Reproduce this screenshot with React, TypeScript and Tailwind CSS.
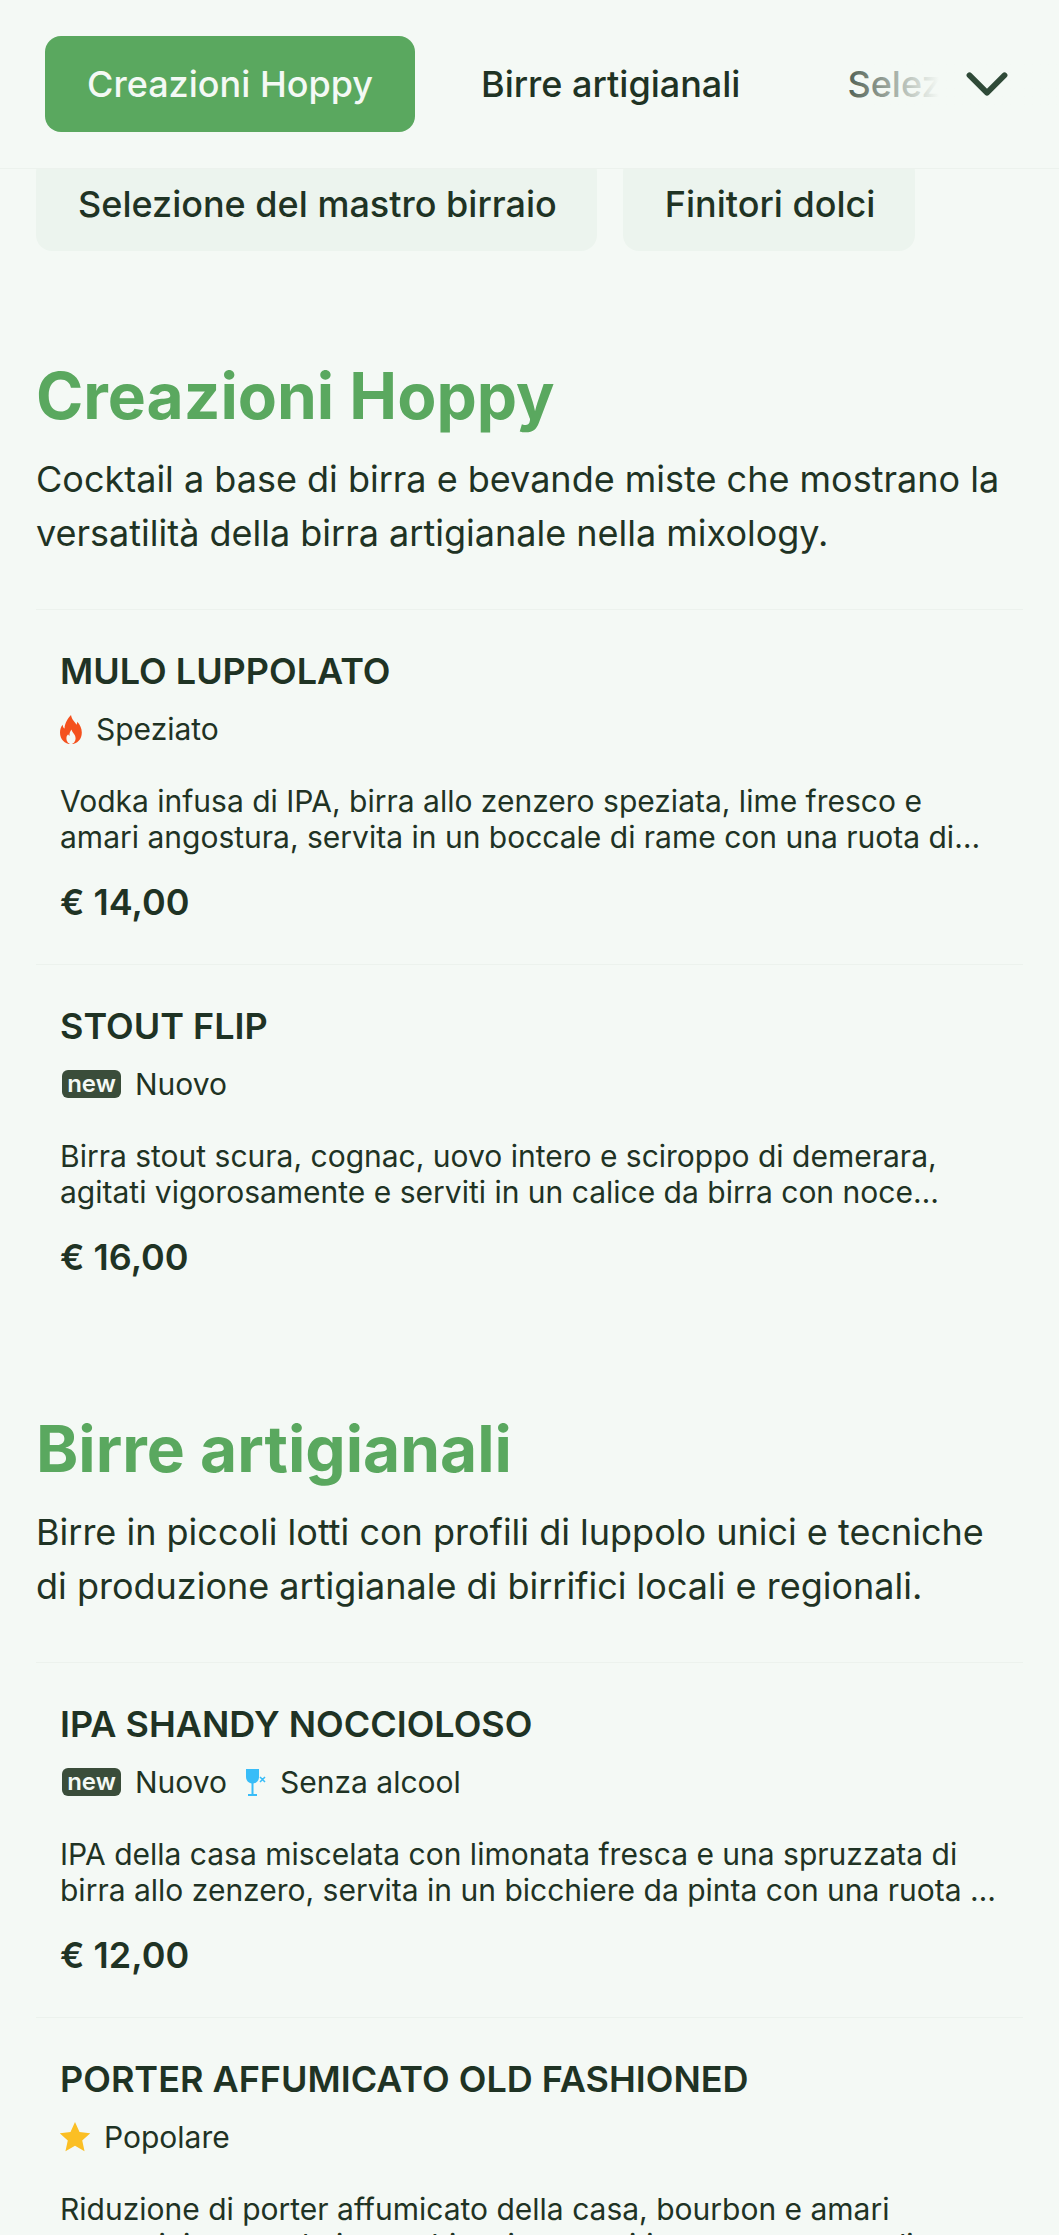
import React from 'react';
import { ChevronDown } from 'lucide-react';

const Flame = () => (
  <svg viewBox="0 0 24 30" className="h-[29px] w-[22px] shrink-0" preserveAspectRatio="none">
    <path fill="#f4511e" d="M12 0c1 5 4 7 6 10 .5-1 .8-2 .8-3 3 3 5 7 5 11 0 7-5 12-11.800 12S0 25 0 18c0-3 1-6 3-8 0 2 .6 3 2 4C5 9 8 4 12 0z" />
    <path fill="#f4f9f5" d="M12.500 15c.5 3 4.500 5 4.500 9 0 3-2 6-5 6s-5-3-5-6c0-2 1-3 2-4 .3 1 .8 1.500 1.500 1.500C10 19 11 17 12.500 15z" />
  </svg>
);

const Star = () => (
  <svg viewBox="1 1 22 22" className="h-[30px] w-[30px] shrink-0">
    <path fill="#fbbf24" d="M12 1l3.300 7.400 8 .8-6 5.400 1.700 7.900-7-4.100-7 4.100 1.700-7.900-6-5.400 8-.8z" />
  </svg>
);

const NoAlcohol = () => (
  <svg viewBox="0 0 20 27" className="h-[27px] w-[20px] shrink-0">
    <path fill="#38bdf8" d="M0 0h13v8c0 3.500-2.400 6-5.500 6.500V25H11v2H2v-2h3.500V14.500C2.400 14 0 11.500 0 8z" />
    <path stroke="#38bdf8" strokeWidth="1.500" d="M14 8l5 5M19 8l-5 5" />
  </svg>
);

const NewBadge = () => (
  <span className="ml-[2px] flex h-[28px] w-[59px] shrink-0 items-center justify-center rounded-[6px] bg-[#3a4d3a] text-[24px] leading-none font-semibold text-[#f4f9f5]">
    new
  </span>
);

interface Tag {
  icon: React.ReactNode;
  label: string;
}

interface Item {
  name: string;
  tags: Tag[];
  desc: string;
  price?: string;
}

interface Section {
  title: string;
  intro: string;
  items: Item[];
}

const sections: Section[] = [
  {
    title: 'Creazioni Hoppy',
    intro: 'Cocktail a base di birra e bevande miste che mostrano la versatilità della birra artigianale nella mixology.',
    items: [
      {
        name: 'MULO LUPPOLATO',
        tags: [{ icon: <Flame />, label: 'Speziato' }],
        desc: 'Vodka infusa di IPA, birra allo zenzero speziata, lime fresco e amari angostura, servita in un boccale di rame con una ruota di lime disidratata e menta fresca.',
        price: '€ 14,00',
      },
      {
        name: 'STOUT FLIP',
        tags: [{ icon: <NewBadge />, label: 'Nuovo' }],
        desc: 'Birra stout scura, cognac, uovo intero e sciroppo di demerara, agitati vigorosamente e serviti in un calice da birra con noce moscata appena grattugiata sopra.',
        price: '€ 16,00',
      },
    ],
  },
  {
    title: 'Birre artigianali',
    intro: 'Birre in piccoli lotti con profili di luppolo unici e tecniche di produzione artigianale di birrifici locali e regionali.',
    items: [
      {
        name: 'IPA SHANDY NOCCIOLOSO',
        tags: [
          { icon: <NewBadge />, label: 'Nuovo' },
          { icon: <NoAlcohol />, label: 'Senza alcool' },
        ],
        desc: 'IPA della casa miscelata con limonata fresca e una spruzzata di birra allo zenzero, servita in un bicchiere da pinta con una ruota di limone e rametto di rosmarino.',
        price: '€ 12,00',
      },
      {
        name: 'PORTER AFFUMICATO OLD FASHIONED',
        tags: [{ icon: <Star />, label: 'Popolare' }],
        desc: 'Riduzione di porter affumicato della casa, bourbon e amari aromatici, mescolati con ghiaccio e serviti con una scorza di arancia.',
      },
    ],
  },
];

const App: React.FC = () => {
  return (
    <div className="h-[2235px] overflow-hidden bg-[#f4f9f5] font-['Inter',sans-serif] text-[#1f3324]">
      {/* barra categorie */}
      <div className="relative z-10 flex h-[169px] items-center border-b border-[#ecf2ed] bg-[#f4f9f5] pl-[45px]">
        <div className="flex h-[96px] w-[370px] shrink-0 items-center justify-center rounded-[16px] bg-[#5aa85f] text-[36px] font-medium text-[#f4f9f5]">
          Creazioni Hoppy
        </div>
        <div className="relative flex flex-1 items-center overflow-hidden">
          <span className="ml-[66px] shrink-0 text-[36px] font-medium">Birre artigianali</span>
          <span className="ml-[107px] shrink-0 text-[36px] font-medium">Selezione del mastro birraio</span>
          <div className="absolute top-0 right-0 bottom-0 flex w-[240px] items-center justify-end bg-gradient-to-r from-transparent via-[#f4f9f5] via-50% to-[#f4f9f5] pr-[37px]">
            <ChevronDown size={70} strokeWidth={2} className="text-[#2f4a38]" />
          </div>
        </div>
      </div>

      {/* seconda riga */}
      <div className="-mt-[13px] flex gap-[26px] pl-[36px]">
        <div className="flex h-[95px] items-center rounded-[16px] bg-[#ecf4ee] pr-[40px] pl-[42px] text-[36px] font-medium">
          Selezione del mastro birraio
        </div>
        <div className="flex h-[95px] items-center rounded-[16px] bg-[#ecf4ee] pr-[40px] pl-[42px] text-[36px] font-medium">
          Finitori dolci
        </div>
      </div>

      <div className="flex flex-col gap-[94px] px-[36px] pt-[109px]">
        {sections.map((s) => (
          <section key={s.title}>
            <h2 className="text-[64px] leading-[72px] font-bold text-[#5aa85f]">{s.title}</h2>
            <p className="mt-[20px] text-[36px] leading-[54px]">{s.intro}</p>
            <div className="mt-[49px] flex flex-col">
              {s.items.map((item) => (
                <div key={item.name} className="border-t border-[#ecf2ed] px-[24px] pt-[38px] pb-[39px]">
                  <h3 className="text-[36px] leading-[46px] font-semibold">{item.name}</h3>
                  <div className="mt-[15px] flex items-center gap-[19px]">
                    {item.tags.map((t) => (
                      <div key={t.label} className="flex items-center gap-[14px]">
                        {t.icon}
                        <span className="text-[30px] leading-[40px]">{t.label}</span>
                      </div>
                    ))}
                  </div>
                  <p className="mt-[34px] line-clamp-2 text-[30px] leading-[36px]">{item.desc}</p>
                  {item.price && <div className="mt-[24px] text-[36px] leading-[46px] font-semibold">{item.price}</div>}
                </div>
              ))}
            </div>
          </section>
        ))}
      </div>
    </div>
  );
};

export default App;
